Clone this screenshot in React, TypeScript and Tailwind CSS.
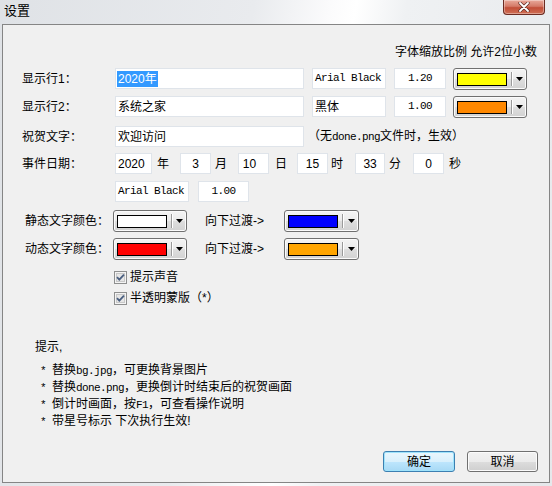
import React from "react";

const sans = "font-['Liberation_Sans','Noto_Sans_CJK_SC',sans-serif]";
const mono = "font-['Liberation_Mono','Noto_Sans_CJK_SC',monospace]";
const m = "text-[11px] tracking-[-0.6px] " + mono;

function Box({
  className = "",
  children,
  isMono = false,
}: {
  className?: string;
  children?: React.ReactNode;
  isMono?: boolean;
}) {
  return (
    <div
      className={
        "h-[21px] shrink-0 overflow-hidden whitespace-nowrap bg-white border border-[#dfe4ea] flex items-center text-[12px] leading-none text-black " +
        className
      }
    >
      {isMono ? <span className={m}>{children}</span> : children}
    </div>
  );
}

function ColorBtn({ swatch, className = "" }: { swatch: string; className?: string }) {
  return (
    <div
      className={
        "h-[22px] shrink-0 rounded-[3px] border border-[#707070] bg-[linear-gradient(#f4f4f4_0%,#ebebeb_50%,#dedede_51%,#d2d2d2_100%)] shadow-[inset_0_0_0_1px_#fbfbfb] flex items-center pl-[3px] " +
        className
      }
    >
      <div className={"h-[13px] w-[50px] border border-black " + swatch} />
      <div className="ml-[4px] h-[14px] w-[2px] border-l border-l-[#9a9a9a] border-r border-r-white" />
      <div className="flex flex-1 justify-center">
        <svg width="7" height="4" viewBox="0 0 7 4">
          <path d="M0 0H7L3.5 4Z" fill="#000" />
        </svg>
      </div>
    </div>
  );
}

function Check({ label }: { label: React.ReactNode }) {
  return (
    <div className="flex h-[16px] items-center">
      <svg width="13" height="13" viewBox="0 0 13 13" className="shrink-0">
        <rect x="0.5" y="0.5" width="12" height="12" fill="#f4f4f4" stroke="#8e8f8f" />
        <rect x="2.5" y="2.5" width="8" height="8" fill="#e6e6e6" stroke="#c8c8c8" />
        <path d="M3 6.2L5.3 8.6L10 3.6" fill="none" stroke="#4a5f80" strokeWidth="1.8" />
      </svg>
      <span className="ml-[3px] whitespace-nowrap text-[12px] leading-none">{label}</span>
    </div>
  );
}

function Label({ children, className = "" }: { children: React.ReactNode; className?: string }) {
  return <div className={"shrink-0 whitespace-nowrap text-[12px] leading-none " + className}>{children}</div>;
}

export default function App() {
  return (
    <div
      className={
        "flex h-[486px] w-[552px] flex-col bg-[linear-gradient(100deg,#dfe2e6_0%,#e9ebee_40%,#fbfbfc_52%,#ffffff_56%,#eff1f3_64%,#e6e8eb_100%)] text-black " +
        sans
      }
    >
      {/* title bar */}
      <div className="relative flex h-[24px] shrink-0 items-start">
        <div className="ml-[4px] mt-[3px] text-[13px] leading-[16px] text-black">设置</div>
        <div className="ml-auto mr-[7px] flex h-[15px] w-[42px] items-center justify-center rounded-b-[4px] border border-t-0 border-[#6b2b22] bg-[linear-gradient(#e9a99b_0%,#d47a68_45%,#c24e38_55%,#cf6f55_100%)] shadow-[inset_0_0_0_1px_rgba(255,255,255,0.35)]">
          <svg width="12" height="10" viewBox="0 0 12 10">
            <path d="M2 1L10 9M10 1L2 9" stroke="#5a2a22" strokeWidth="3.2" strokeLinecap="round" />
            <path d="M2 1L10 9M10 1L2 9" stroke="#ffffff" strokeWidth="1.8" strokeLinecap="round" />
          </svg>
        </div>
      </div>

      {/* client */}
      <div className="mx-[2px] mb-[3px] flex flex-1 flex-col border border-[#858585] bg-[#f0f0f0] pl-[19px] pr-[11px]">
        <div className="mt-[20px] flex h-[14px] justify-end pr-[1px] text-[12px] leading-[14px]">
          字体缩放比例 允许2位小数
        </div>

        {/* row 1 */}
        <div className="mt-[9px] flex h-[21px] items-center">
          <Label className="w-[93px]">显示行1：</Label>
          <Box className="w-[189px] pl-[1px]">
            <span className="bg-[#3399ff] px-[1px] py-[2px] text-white">2020年</span>
          </Box>
          <Box isMono className="ml-[8px] w-[74px] pl-[2px]">Arial Black</Box>
          <Box isMono className="ml-[8px] w-[52px] justify-center">1.20</Box>
          <ColorBtn swatch="bg-[#ffff00]" className="ml-[7px] mt-[1px] w-[74px]" />
        </div>

        {/* row 2 */}
        <div className="mt-[7px] flex h-[21px] items-center">
          <Label className="w-[93px]">显示行2：</Label>
          <Box className="w-[189px] pl-[2px]">系统之家</Box>
          <Box className="ml-[8px] w-[74px] pl-[2px]">黑体</Box>
          <Box isMono className="ml-[8px] w-[52px] justify-center">1.00</Box>
          <ColorBtn swatch="bg-[#ff8800]" className="ml-[7px] mt-[1px] w-[74px]" />
        </div>

        {/* row 3 */}
        <div className="mt-[9px] flex h-[21px] items-center">
          <Label className="w-[93px]">祝贺文字：</Label>
          <Box className="w-[189px] pl-[2px]">欢迎访问</Box>
          <div className="ml-[4px] whitespace-nowrap text-[12px] leading-none">
            （无<span className={m}>done.png</span>文件时，生效）
          </div>
        </div>

        {/* row 4 */}
        <div className="mt-[6px] flex h-[21px] items-center text-[12px]">
          <Label className="w-[93px]">事件日期：</Label>
          <Box className="w-[37px] pl-[2px]">2020</Box>
          <Label className="ml-[5px]">年</Label>
          <Box className="ml-[11px] w-[31px] justify-center">3</Box>
          <Label className="ml-[4px]">月</Label>
          <Box className="ml-[11px] w-[31px] justify-center pr-[8px]">10</Box>
          <Label className="ml-[6px]">日</Label>
          <Box className="ml-[10px] w-[31px] justify-center">15</Box>
          <Label className="ml-[3px]">时</Label>
          <Box className="ml-[12px] w-[30px] justify-center">33</Box>
          <Label className="ml-[4px]">分</Label>
          <Box className="ml-[12px] w-[31px] justify-center">0</Box>
          <Label className="ml-[5px]">秒</Label>
        </div>

        {/* row 5 */}
        <div className="mt-[7px] flex h-[21px] items-center">
          <div className="w-[93px] shrink-0" />
          <Box isMono className="w-[74px] pl-[2px]">Arial Black</Box>
          <Box isMono className="ml-[9px] w-[51px] justify-center">1.00</Box>
        </div>

        {/* row 6 */}
        <div className="mt-[8px] flex h-[22px] items-center">
          <Label className="ml-[3px] w-[88px]">静态文字颜色：</Label>
          <ColorBtn swatch="bg-white" className="w-[74px]" />
          <Label className="ml-[18px] w-[79px]">向下过渡-&gt;</Label>
          <ColorBtn swatch="bg-[#0000ff]" className="w-[75px]" />
        </div>

        {/* row 7 */}
        <div className="mt-[6px] flex h-[22px] items-center">
          <Label className="ml-[3px] w-[88px]">动态文字颜色：</Label>
          <ColorBtn swatch="bg-[#ff0000]" className="w-[74px]" />
          <Label className="ml-[18px] w-[79px]">向下过渡-&gt;</Label>
          <ColorBtn swatch="bg-[#ffa500]" className="w-[75px]" />
        </div>

        {/* checkboxes */}
        <div className="mt-[9px] flex flex-col gap-[5px] pl-[92px]">
          <Check label="提示声音" />
          <Check label="半透明蒙版（*）" />
        </div>

        {/* tips */}
        <div className="mt-[34px] pl-[13px] text-[12px] leading-[14px]">提示,</div>
        <div className="mt-[8px] flex flex-col whitespace-nowrap pl-[18px] text-[12px] leading-[16px]">
          <div>
            <span className={m}>* </span>替换<span className={m}>bg.jpg</span>，可更换背景图片
          </div>
          <div>
            <span className={m}>* </span>替换<span className={m}>done.png</span>，更换倒计时结束后的祝贺画面
          </div>
          <div>
            <span className={m}>* </span>倒计时画面，按<span className={m}>F1</span>，可查看操作说明
          </div>
          <div>
            <span className={m}>* </span>带星号标示 下次执行生效!
          </div>
        </div>

        {/* buttons */}
        <div className="mb-[10px] mt-auto flex justify-end gap-[12px]">
          <div className="flex h-[21px] w-[72px] items-center justify-center rounded-[3px] border border-[#3c7fb1] bg-[linear-gradient(#eaf6fd_0%,#d9f0fc_50%,#bee6fd_51%,#a7d9f5_100%)] shadow-[inset_0_0_0_1px_#9fe3fb] text-[12px] leading-none">
            确定
          </div>
          <div className="flex h-[21px] w-[71px] items-center justify-center rounded-[3px] border border-[#707070] bg-[linear-gradient(#f2f2f2_0%,#ebebeb_50%,#dddddd_51%,#cfcfcf_100%)] shadow-[inset_0_0_0_1px_#fbfbfb] text-[12px] leading-none">
            取消
          </div>
        </div>
      </div>
    </div>
  );
}
